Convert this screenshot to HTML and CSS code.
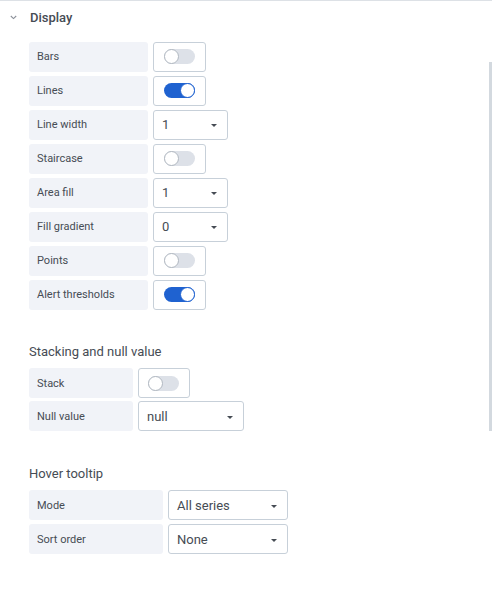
FILE: index.html
```html
<!DOCTYPE html>
<html lang="en">
<head>
<meta charset="utf-8">
<title>Display options</title>
<link rel="stylesheet" href="styles.css">
</head>
<body>
<div class="panel">
  <div class="group-header">
    <svg class="chevron" width="7" height="5" viewBox="0 0 7 5"><path d="M0.8 1 L3.5 3.6 L6.2 1" fill="none" stroke="#8b9099" stroke-width="1.1"/></svg>
    <span class="group-title">Display</span>
  </div>
  <div class="group-body">
    <div class="rows">
      <div class="row"><div class="label w-display">Bars</div><div class="switch-box"><span class="switch"><span class="knob"></span></span></div></div>
      <div class="row"><div class="label w-display">Lines</div><div class="switch-box"><span class="switch on"><span class="knob"></span></span></div></div>
      <div class="row"><div class="label w-display">Line width</div><div class="select s-75"><span class="value">1</span><span class="caret"></span></div></div>
      <div class="row"><div class="label w-display">Staircase</div><div class="switch-box"><span class="switch"><span class="knob"></span></span></div></div>
      <div class="row"><div class="label w-display">Area fill</div><div class="select s-75"><span class="value">1</span><span class="caret"></span></div></div>
      <div class="row"><div class="label w-display">Fill gradient</div><div class="select s-75"><span class="value">0</span><span class="caret"></span></div></div>
      <div class="row"><div class="label w-display">Points</div><div class="switch-box"><span class="switch"><span class="knob"></span></span></div></div>
      <div class="row"><div class="label w-display">Alert thresholds</div><div class="switch-box"><span class="switch on"><span class="knob"></span></span></div></div>
    </div>

    <div class="section sec-stack">
      <div class="section-title">Stacking and null value</div>
      <div class="rows tight">
        <div class="row"><div class="label w-stack">Stack</div><div class="switch-box narrow"><span class="switch"><span class="knob"></span></span></div></div>
        <div class="row"><div class="label w-stack">Null value</div><div class="select s-106"><span class="value">null</span><span class="caret"></span></div></div>
      </div>
    </div>

    <div class="section sec-hover">
      <div class="section-title">Hover tooltip</div>
      <div class="rows">
        <div class="row"><div class="label w-hover">Mode</div><div class="select s-120"><span class="value">All series</span><span class="caret"></span></div></div>
        <div class="row"><div class="label w-hover">Sort order</div><div class="select s-120"><span class="value">None</span><span class="caret"></span></div></div>
      </div>
    </div>
  </div>
  <div class="scrollbar"></div>
</div>
</body>
</html>
```
FILE: styles.css
```css
* { box-sizing: border-box; }
html, body { margin: 0; padding: 0; background: #ffffff; }
body {
  font-family: Roboto, "Liberation Sans", Arial, sans-serif;
  color: #464c54;
  width: 494px;
  height: 602px;
  overflow: hidden;
}
.panel {
  position: relative;
  width: 492px;
  height: 602px;
  border-top: 1px solid #dde1e6;
}
.group-header {
  display: flex;
  align-items: center;
  height: 32px;
  padding-left: 10px;
}
.chevron { display: block; margin-top: 1px; }
.group-title {
  margin-left: 13px;
  font-size: 13px;
  font-weight: 500;
  color: #464c54;
}
.group-body {
  padding-left: 29px;
  padding-top: 8.5px;
}
.rows {
  display: flex;
  flex-direction: column;
  gap: 4px;
}
.rows.tight { gap: 3px; }
.row {
  display: flex;
  gap: 5px;
  height: 30px;
}
.label {
  display: flex;
  align-items: center;
  padding-left: 8px;
  background: #f1f3f8;
  border-radius: 3px;
  font-size: 11px;
  font-weight: 400;
  color: #464c54;
}
.w-display { width: 119px; }
.w-stack { width: 104px; }
.w-hover { width: 134px; }
.switch-box {
  width: 53px;
  height: 30px;
  border: 1px solid #c7d0d9;
  border-radius: 3px;
  display: flex;
  align-items: center;
  justify-content: center;
  padding-right: 1px;
}
.switch-box.narrow { width: 52px; }
.switch {
  width: 31px;
  height: 15px;
  border-radius: 8px;
  background: #dde1e8;
  display: flex;
  align-items: center;
}
.switch.on {
  background: #1f62d0;
  justify-content: flex-end;
}
.knob {
  width: 15px;
  height: 15px;
  border-radius: 50%;
  background: #ffffff;
  border: 1px solid #b0b7c0;
}
.switch.on .knob {
  border: 1.5px solid #1f62d0;
}
.select {
  height: 30px;
  border: 1px solid #c7d0d9;
  border-radius: 3px;
  background: #ffffff;
  display: flex;
  align-items: center;
  justify-content: space-between;
  padding-left: 8px;
  padding-right: 10px;
}
.s-75 { width: 75px; }
.s-106 { width: 106px; }
.s-120 { width: 120px; }
.value {
  font-size: 13px;
  color: #464c54;
}
.caret {
  width: 0;
  height: 0;
  border-left: 3px solid transparent;
  border-right: 3px solid transparent;
  border-top: 3px solid #464c54;
  margin-top: 2px;
}
.section-title {
  height: 20px;
  line-height: 20px;
  font-size: 13px;
  color: #464c54;
  margin-bottom: 6px;
}
.sec-stack { margin-top: 32.5px; }
.sec-hover { margin-top: 33px; }
.scrollbar {
  position: absolute;
  right: 0;
  top: 61px;
  width: 3px;
  height: 369px;
  background: #d3d9df;
}
```
